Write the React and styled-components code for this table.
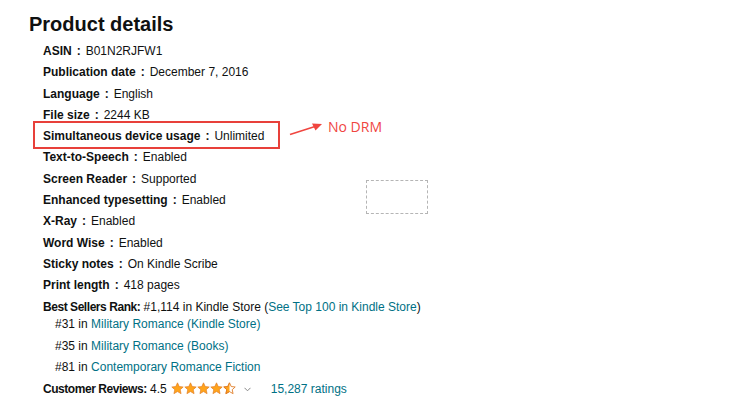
import React from "react";
import styled, { createGlobalStyle } from "styled-components";

const Global = createGlobalStyle`
  html, body { margin: 0; padding: 0; background: #fff; }
  body { font-family: "Liberation Sans", Arial, sans-serif; color: #0f1111; }
`;

const Page = styled.div`
  position: relative;
  width: 730px;
  height: 416px;
  padding: 11px 0 0 29px;
  box-sizing: border-box;
  overflow: hidden;
`;

const Title = styled.h2`
  margin: 0 0 4px 0;
  font-size: 20px;
  line-height: 26px;
  font-weight: 700;
`;

const List = styled.ul`
  list-style: none;
  margin: 0 0 0 14px;
  padding: 0;
`;

const Row = styled.li`
  height: 21.3px;
  line-height: 21.3px;
  font-size: 12px;
  white-space: nowrap;
`;

const Label = styled.span`
  font-weight: 700;
  letter-spacing: ${(p) => (p.$compact ? "-0.45px" : "0")};
`;

const Sep = styled.span`
  font-weight: 700;
  margin: 0 5px;
`;

const Highlight = styled.span`
  position: relative;
  &::before {
    content: "";
    position: absolute;
    left: -10px;
    right: -16px;
    top: -8px;
    bottom: -6px;
    border: 2px solid #e8403a;
  }
`;

const Annotation = styled.div`
  position: absolute;
  left: 288px;
  top: 118px;
  display: flex;
  align-items: flex-start;
  gap: 4px;
  color: #f0453f;
  font-family: "Open Sans", "Liberation Sans", sans-serif;
  font-size: 14px;
  line-height: 18px;
`;

const Placeholder = styled.div`
  position: absolute;
  left: 366px;
  top: 180px;
  width: 60px;
  height: 32px;
  border: 1px dashed #b5b5b5;
`;

const Link = styled.a`
  color: #007185;
  text-decoration: none;
`;

const SubList = styled.ul`
  list-style: none;
  margin: -3.5px 0 0 12px;
  padding: 0;
`;

const Stars = styled.span`
  display: inline-flex;
  vertical-align: -2px;
  margin-left: 4px;
`;

const Chevron = styled.span`
  display: inline-block;
  margin: 0 20px 0 8px;
  vertical-align: 1px;
`;

const STAR =
  "M12 1.5l3.2 6.9 7.3.8-5.5 5 1.6 7.3L12 17.7l-6.6 3.8L7 14.2l-5.5-5 7.3-.8z";

const Star = ({ half }) => (
  <svg width="13" height="13" viewBox="0 0 24 24">
    <defs>
      <clipPath id="halfclip">
        <rect x="0" y="0" width="12" height="24" />
      </clipPath>
    </defs>
    {half ? (
      <>
        <path d={STAR} fill="none" stroke="#de7921" strokeWidth="1.6" strokeLinejoin="round" />
        <path
          d={STAR}
          fill="#ffa41c"
          stroke="#de7921"
          strokeWidth="1.6"
          strokeLinejoin="round"
          clipPath="url(#halfclip)"
        />
      </>
    ) : (
      <path d={STAR} fill="#ffa41c" stroke="#de7921" strokeWidth="1.2" strokeLinejoin="round" />
    )}
  </svg>
);

const details = [
  ["ASIN", "B01N2RJFW1"],
  ["Publication date", "December 7, 2016"],
  ["Language", "English"],
  ["File size", "2244 KB"],
  ["Simultaneous device usage", "Unlimited", true],
  ["Text-to-Speech", "Enabled"],
  ["Screen Reader", "Supported"],
  ["Enhanced typesetting", "Enabled"],
  ["X-Ray", "Enabled"],
  ["Word Wise", "Enabled"],
  ["Sticky notes", "On Kindle Scribe"],
  ["Print length", "418 pages"],
];

const ranks = [
  ["#31", "Military Romance (Kindle Store)"],
  ["#35", "Military Romance (Books)"],
  ["#81", "Contemporary Romance Fiction"],
];

export default function App() {
  return (
    <>
      <Global />
      <Page>
        <Title>Product details</Title>
        <List>
          {details.map(([k, v, hl]) => {
            const content = (
              <>
                <Label>{k}</Label>
                <Sep>:</Sep>
                <span>{v}</span>
              </>
            );
            return (
              <Row key={k}>{hl ? <Highlight>{content}</Highlight> : content}</Row>
            );
          })}
          <Row>
            <Label $compact>Best Sellers Rank:</Label> #1,114 in Kindle Store (
            <Link>See Top 100 in Kindle Store</Link>)
          </Row>
          <li>
            <SubList>
              {ranks.map(([n, t]) => (
                <Row key={n}>
                  {n} in <Link>{t}</Link>
                </Row>
              ))}
            </SubList>
          </li>
          <Row>
            <Label $compact>Customer Reviews:</Label> 4.5
            <Stars>
              <Star />
              <Star />
              <Star />
              <Star />
              <Star half />
            </Stars>
            <Chevron>
              <svg width="7" height="5" viewBox="0 0 7 5">
                <path d="M0.5 0.8l3 3 3-3" fill="none" stroke="#888" strokeWidth="1" />
              </svg>
            </Chevron>
            <Link>15,287 ratings</Link>
          </Row>
        </List>
        <Annotation>
          <svg width="36" height="18" viewBox="0 0 36 18">
            <path d="M2 16.5 L27 8.5" stroke="#f0453f" strokeWidth="1.6" />
            <path d="M34 6 L24 5.5 L27.5 12.5 Z" fill="#f0453f" />
          </svg>
          <span>No DRM</span>
        </Annotation>
        <Placeholder />
      </Page>
    </>
  );
}
